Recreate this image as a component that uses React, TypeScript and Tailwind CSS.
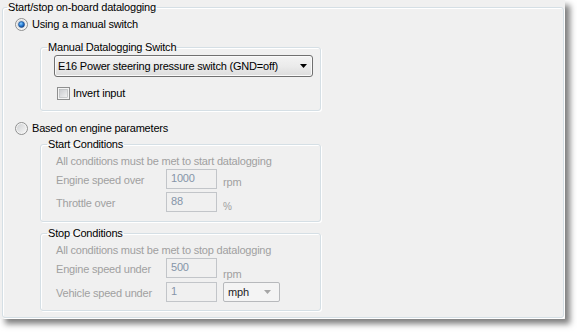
import type { ReactNode } from 'react';

const font = { fontFamily: '"Liberation Sans", Arial, sans-serif' };

const GroupBox = ({
  title,
  className,
  legendClass,
  children,
}: {
  title: string;
  className: string;
  legendClass: string;
  children: ReactNode;
}) => (
  <fieldset className={`rounded-[3px] border border-[#d5dfe5] shadow-[inset_1px_1px_0_#ffffff,1px_1px_0_#ffffff] ${className}`}>
    <legend className={`px-[1px] leading-[14px] text-black ${legendClass}`}>{title}</legend>
    {children}
  </fieldset>
);

const Radio = ({ checked }: { checked?: boolean }) => (
  <svg width="13" height="13" viewBox="0 0 13 13" className="shrink-0">
    <defs>
      <linearGradient id={checked ? 'rin1' : 'rin0'} x1="0" y1="0" x2="1" y2="1">
        <stop offset="0" stopColor="#cfd1d3" />
        <stop offset="1" stopColor="#f6f6f6" />
      </linearGradient>
      <radialGradient id="rdot" cx="0.4" cy="0.35" r="0.7">
        <stop offset="0" stopColor="#8fd0ff" />
        <stop offset="0.5" stopColor="#2a7fd6" />
        <stop offset="1" stopColor="#0d3a80" />
      </radialGradient>
    </defs>
    <circle cx="6.5" cy="6.5" r="6" fill="#f4f4f4" stroke="#8e8f8f" strokeWidth="1" />
    <circle cx="6.5" cy="6.5" r="4.5" fill={`url(#${checked ? 'rin1' : 'rin0'})`} />
    {checked && <circle cx="6.5" cy="6.5" r="3" fill="url(#rdot)" stroke="#1c4f8f" strokeWidth="0.6" />}
  </svg>
);

const Checkbox = () => (
  <svg width="13" height="13" viewBox="0 0 13 13" className="shrink-0">
    <defs>
      <linearGradient id="cbin" x1="0" y1="0" x2="1" y2="1">
        <stop offset="0" stopColor="#c9cbce" />
        <stop offset="1" stopColor="#f2f2f2" />
      </linearGradient>
    </defs>
    <rect x="0.5" y="0.5" width="12" height="12" fill="#f4f4f4" stroke="#8e8f8f" />
    <rect x="2.5" y="2.5" width="8" height="8" fill="url(#cbin)" stroke="#b0b2b5" strokeWidth="0.6" />
  </svg>
);

const Arrow = ({ color }: { color: string }) => (
  <svg width="7" height="4" viewBox="0 0 7 4" className="shrink-0">
    <path d="M0 0h7L3.5 4z" fill={color} />
  </svg>
);

const Row = ({
  label,
  value,
  unit,
  unitClass,
  className,
  combo,
}: {
  label: string;
  value: string;
  unit?: string;
  unitClass?: string;
  className: string;
  combo?: boolean;
}) => (
  <div className={`flex h-[20px] items-start ${className}`}>
    <div className="mt-[4px] w-[110px] leading-[14px] text-[#a0a0a0]">{label}</div>
    <div className="h-[20px] w-[51px] border border-[#c2c5c9] bg-[#f0f0f0] pl-[4px] pt-[1px] leading-[14px] text-[#8595a8]">
      {value}
    </div>
    {combo ? (
      <div className="ml-[6px] flex h-[20px] w-[57px] items-center justify-between rounded-[2px] border border-[#b7b9bc] bg-[#f4f4f4] pl-[4px] pr-[8px] text-[#222]">
        <span className="leading-[14px]">mph</span>
        <Arrow color="#a6a6a6" />
      </div>
    ) : (
      <div className={`ml-[6px] leading-[14px] text-[#a0a0a0] ${unitClass}`}>{unit}</div>
    )}
  </div>
);

export default function App() {
  return (
    <div className="min-h-screen bg-white text-[11px] tracking-[-0.2px]" style={font}>
      <div className="h-[319px] w-[565px] bg-[#f0f0f0] pt-0 shadow-[5px_5px_6px_rgba(0,0,0,0.5)]">
        <GroupBox title="Start/stop on-board datalogging" className="ml-[2px] h-[318px] w-[562px]" legendClass="ml-[4px]">
          <div className="mt-[4px] ml-[12px] flex items-center gap-[4px] leading-[13px]">
            <Radio checked />
            <span>Using a manual switch</span>
          </div>

          <GroupBox title="Manual Datalogging Switch" className="mt-[9px] ml-[37px] h-[71px] w-[281px]" legendClass="ml-[6px]">
            <div className="mt-[1px] ml-[13px] flex h-[22px] w-[259px] items-center justify-between rounded-[3px] border border-[#707070] bg-gradient-to-b from-[#f3f3f3] via-[#ebebeb] to-[#dcdcdc] pl-[3px] pr-[5px] shadow-[inset_0_0_0_1px_#fafafa]">
              <span className="leading-[14px]">E16 Power steering pressure switch (GND=off)</span>
              <Arrow color="#000" />
            </div>
            <div className="mt-[10px] ml-[16px] flex items-center gap-[3px] leading-[13px]">
              <Checkbox />
              <span>Invert input</span>
            </div>
          </GroupBox>

          <div className="mt-[11px] ml-[12px] flex items-center gap-[4px] leading-[13px]">
            <Radio />
            <span>Based on engine parameters</span>
          </div>

          <GroupBox title="Start Conditions" className="mt-[2px] ml-[37px] h-[85px] w-[281px]" legendClass="ml-[6px]">
            <div className="mt-[3px] ml-[15px] leading-[14px] text-[#a0a0a0]">All conditions must be met to start datalogging</div>
            <div className="ml-[15px]">
              <Row label="Engine speed over" value="1000" unit="rpm" unitClass="mt-[6px]" className="mt-[1px]" />
              <Row label="Throttle over" value="88" unit="%" unitClass="mt-[8px] text-[10px]" className="mt-[3px]" />
            </div>
          </GroupBox>

          <GroupBox title="Stop Conditions" className="mt-[4px] ml-[37px] h-[85px] w-[281px]" legendClass="ml-[6px]">
            <div className="mt-[3px] ml-[15px] leading-[14px] text-[#a0a0a0]">All conditions must be met to stop datalogging</div>
            <div className="ml-[15px]">
              <Row label="Engine speed under" value="500" unit="rpm" unitClass="mt-[9px]" className="mt-[1px]" />
              <Row label="Vehicle speed under" value="1" className="mt-[4px]" combo />
            </div>
          </GroupBox>
        </GroupBox>
      </div>
    </div>
  );
}
